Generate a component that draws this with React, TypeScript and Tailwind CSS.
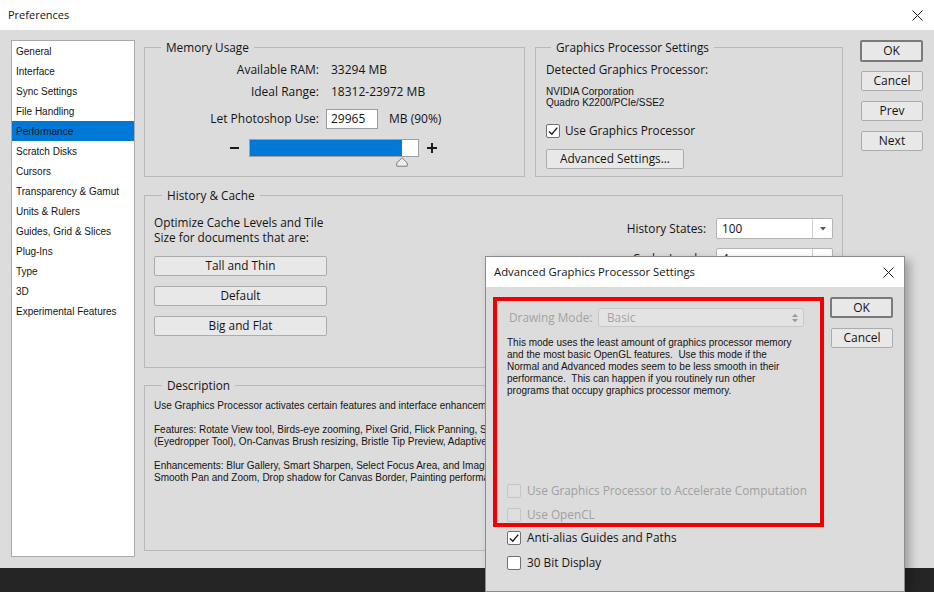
import React from 'react'

const small = "font-['Liberation_Sans',Arial,sans-serif] text-[10px]"

function CloseIcon({ size = 11 }: { size?: number }) {
  return (
    <svg width={size} height={size} viewBox="0 0 11 11" fill="none">
      <path d="M0.5 0.5L10.5 10.5M10.5 0.5L0.5 10.5" stroke="#1b1b1b" strokeWidth="1" />
    </svg>
  )
}

function Btn({
  children,
  primary = false,
  className = '',
}: {
  children: React.ReactNode
  primary?: boolean
  className?: string
}) {
  return (
    <div
      className={`flex items-center justify-center rounded-[2px] bg-[#e8e8e8] ${
        primary ? 'border-2 border-[#7a7a7a]' : 'border border-[#acacac]'
      } ${className}`}
    >
      {children}
    </div>
  )
}

function Check({ checked = false, disabled = false }: { checked?: boolean; disabled?: boolean }) {
  return (
    <span
      className={`flex h-[14px] w-[14px] shrink-0 items-center justify-center rounded-[2px] border ${
        disabled ? 'border-[#c6c6c6] bg-[#dedede]' : 'border-[#707070] bg-white'
      }`}
    >
      {checked && (
        <svg width="12" height="12" viewBox="0 0 12 12" fill="none">
          <path d="M2 6.5L4.8 9.3L10.3 2.6" stroke="#1e1e1e" strokeWidth="1.4" />
        </svg>
      )}
    </span>
  )
}

function Combo({ value }: { value: string }) {
  return (
    <div className="flex h-[21px] w-[117px] rounded-[2px] border border-[#b4b4b4] bg-white">
      <div className="flex-1 pl-[5px] leading-[19px]">{value}</div>
      <div className="flex w-[20px] items-center justify-center border-l border-[#d0d0d0]">
        <svg width="6" height="4" viewBox="0 0 6 4">
          <path d="M0 0H6L3 3.5Z" fill="#555" />
        </svg>
      </div>
    </div>
  )
}

function Group({
  title,
  className,
  legendClass = 'ml-[16px]',
  children,
}: {
  title: string
  className: string
  legendClass?: string
  children: React.ReactNode
}) {
  return (
    <fieldset className={`border border-[#b9b9b9] ${className}`}>
      <legend className={`px-[5px] text-[11.8px] leading-[16px] ${legendClass}`}>{title}</legend>
      {children}
    </fieldset>
  )
}

const sections = [
  'General',
  'Interface',
  'Sync Settings',
  'File Handling',
  'Performance',
  'Scratch Disks',
  'Cursors',
  'Transparency & Gamut',
  'Units & Rulers',
  'Guides, Grid & Slices',
  'Plug-Ins',
  'Type',
  '3D',
  'Experimental Features',
]

export default function App() {
  return (
    <div className="relative h-[592px] w-[934px] overflow-hidden bg-[#dcdcdc] font-['Open_Sans','Noto_Sans',sans-serif] text-[11.8px] text-[#141414]">
      {/* title bar */}
      <div className="flex h-[30px] items-center justify-between bg-white pl-[8px] pr-[11px]">
        <span className="text-[11px]">Preferences</span>
        <CloseIcon />
      </div>

      <div className="flex h-[538px] items-start pl-[11px] pt-[9px]">
        {/* sections list */}
        <div className={`mt-px h-[517px] w-[124px] border border-[#a9a9a9] bg-white ${small}`}>
          {sections.map((s) => (
            <div
              key={s}
              className={`flex h-[20px] items-center pl-[4px] ${s === 'Performance' ? 'bg-[#0078d7]' : ''}`}
            >
              {s}
            </div>
          ))}
        </div>

        <div className="ml-[9px] flex w-[699px] flex-col">
          <div className="flex gap-[10px]">
            <Group title="Memory Usage" className="h-[138px] w-[381px]">
              <div className="mt-[5px] flex flex-col text-[12px]">
                <div className="flex h-[20px] items-center">
                  <span className="w-[174px] text-right">Available RAM:</span>
                  <span className="ml-[12px]">33294 MB</span>
                </div>
                <div className="mt-[2px] flex h-[20px] items-center">
                  <span className="w-[174px] text-right">Ideal Range:</span>
                  <span className="ml-[12px]">18312-23972 MB</span>
                </div>
                <div className="mt-[7px] flex h-[20px] items-center">
                  <span className="w-[174px] text-right">Let Photoshop Use:</span>
                  <div className="ml-[7px] h-[20px] w-[52px] border border-[#9c9c9c] bg-white pl-[4px] leading-[18px]">
                    29965
                  </div>
                  <span className="ml-[11px]">MB (90%)</span>
                </div>
                <div className="mt-[10px] flex h-[18px] items-center pl-[81px]">
                  <div className="flex w-[16px] justify-center">
                    <svg width="9" height="2" viewBox="0 0 9 2">
                      <rect width="9" height="2" fill="#1b1b1b" />
                    </svg>
                  </div>
                  <div className="relative ml-[7px] h-[18px] w-[170px] border border-[#a0a0a0] bg-white">
                    <div className="h-full w-[152px] bg-[#0078d7]" />
                    <svg
                      className="absolute left-[146px] top-[17px]"
                      width="12"
                      height="10"
                      viewBox="0 0 12 10"
                    >
                      <path d="M6 0.8L11.2 6V9.2H0.8V6Z" fill="#efefef" stroke="#7a7a7a" strokeWidth="1" />
                    </svg>
                  </div>
                  <div className="ml-[5px] flex w-[16px] justify-center">
                    <svg width="10" height="10" viewBox="0 0 10 10">
                      <rect y="4" width="10" height="2" fill="#1b1b1b" />
                      <rect x="4" width="2" height="10" fill="#1b1b1b" />
                    </svg>
                  </div>
                </div>
              </div>
            </Group>

            <Group title="Graphics Processor Settings" className="h-[138px] w-[308px]" legendClass="ml-[15px]">
              <div className="flex flex-col items-start pl-[10px]">
                <div className="mt-[6px] leading-[16px]">Detected Graphics Processor:</div>
                <div className={`mt-[9px] leading-[11px] ${small}`}>
                  NVIDIA Corporation
                  <br />
                  Quadro K2200/PCIe/SSE2
                </div>
                <div className="mt-[15px] flex h-[16px] items-center">
                  <Check checked />
                  <span className="ml-[5px]">Use Graphics Processor</span>
                </div>
                <Btn className="mt-[10px] h-[20px] w-[138px]">Advanced Settings...</Btn>
              </div>
            </Group>
          </div>

          <Group title="History & Cache" className="mt-[10px] h-[181px] w-[699px]" legendClass="ml-[17px]">
            <div className="flex justify-between pl-[9px] pr-[9px]">
              <div className="flex flex-col">
                <div className="mt-[12px] leading-[15px]">
                  <div>Optimize Cache Levels and Tile</div>
                  <div>Size for documents that are:</div>
                </div>
                <Btn className="mt-[11px] h-[20px] w-[173px]">Tall and Thin</Btn>
                <Btn className="mt-[10px] h-[20px] w-[173px]">Default</Btn>
                <Btn className="mt-[10px] h-[20px] w-[173px]">Big and Flat</Btn>
              </div>
              <div className="mt-[15px] flex flex-col items-end gap-[9px]">
                <div className="flex items-center">
                  <span className="mr-[10px]">History States:</span>
                  <Combo value="100" />
                </div>
                <div className="flex items-center">
                  <span className="mr-[10px]">Cache Levels:</span>
                  <Combo value="4" />
                </div>
              </div>
            </div>
          </Group>

          <Group title="Description" className="mt-[9px] h-[174px] w-[699px] overflow-hidden" legendClass="ml-[17px]">
            <div className={`whitespace-nowrap pl-[9px] pt-[7px] leading-[12px] ${small}`}>
              <div>
                Use Graphics Processor activates certain features and interface enhancements. It does not activate
                OpenGL on already open document windows.
              </div>
              <div className="mt-[12px]">
                Features: Rotate View tool, Birds-eye zooming, Pixel Grid, Flick Panning, Scrubby Zoom, HUD Color
                Picker and Rich Cursor info, Sampling Ring
              </div>
              <div>
                (Eyedropper Tool), On-Canvas Brush resizing, Bristle Tip Preview, Adaptive Wide Angle, Lighting Effects
                Gallery, Oil Paint, 3D
              </div>
              <div className="mt-[12px]">
                Enhancements: Blur Gallery, Smart Sharpen, Select Focus Area, and Image Size with Preserve Details
                (Reduced Noise), Camera Raw
              </div>
              <div>Smooth Pan and Zoom, Drop shadow for Canvas Border, Painting performance, Transform/Warp</div>
            </div>
          </Group>
        </div>

        <div className="ml-[17px] mt-px flex w-[63px] flex-col items-end text-[12px]">
          <Btn primary className="h-[22px] w-[63px]">OK</Btn>
          <Btn className="mt-[9px] h-[20px] w-[62px]">Cancel</Btn>
          <Btn className="mt-[10px] h-[20px] w-[62px]">Prev</Btn>
          <Btn className="mt-[10px] h-[20px] w-[62px]">Next</Btn>
        </div>
      </div>

      <div className="h-[24px] bg-[#252525]" />

      {/* Advanced Graphics Processor Settings dialog */}
      <div className="absolute left-[485px] top-[256px] flex h-[336px] w-[420px] flex-col border border-[#8c8c8c] bg-[#dcdcdc] shadow-[5px_4px_9px_rgba(0,0,0,0.28)]">
        <div className="flex h-[30px] shrink-0 items-center justify-between bg-white pl-[8px] pr-[10px]">
          <span className="text-[11.3px]">Advanced Graphics Processor Settings</span>
          <CloseIcon />
        </div>
        <div className="flex pl-[7px] pt-[10px]">
          <div className="flex w-[331px] flex-col">
            <div className="flex h-[230px] flex-col border-4 border-[#f00000] pl-[10px] pt-[7px]">
              <div className="ml-[2px] flex h-[19px] items-center">
                <span className="w-[89px] text-[#a3a3a3]">Drawing Mode:</span>
                <div className="flex h-[19px] w-[206px] items-center justify-between rounded-[3px] border border-[#c8c8c8] bg-[#e3e3e3] pl-[8px] pr-[5px] text-[#a3a3a3]">
                  <span>Basic</span>
                  <svg width="6" height="10" viewBox="0 0 6 10">
                    <path d="M0 4H6L3 0.8Z M0 6H6L3 9.2Z" fill="#9a9a9a" />
                  </svg>
                </div>
              </div>
              <div className={`mt-[10px] whitespace-pre leading-[12px] ${small}`}>
                {'This mode uses the least amount of graphics processor memory\nand the most basic OpenGL features.  Use this mode if the\nNormal and Advanced modes seem to be less smooth in their\nperformance.  This can happen if you routinely run other\nprograms that occupy graphics processor memory.'}
              </div>
              <div className="mt-auto flex flex-col gap-[8px] text-[#a0a0a0]">
                <div className="flex h-[16px] items-center">
                  <Check disabled />
                  <span className="ml-[6px]">Use Graphics Processor to Accelerate Computation</span>
                </div>
                <div className="flex h-[16px] items-center">
                  <Check disabled />
                  <span className="ml-[6px]">Use OpenCL</span>
                </div>
              </div>
            </div>
            <div className="mt-[3px] flex flex-col gap-[9px] pl-[14px]">
              <div className="flex h-[16px] items-center">
                <Check checked />
                <span className="ml-[6px]">Anti-alias Guides and Paths</span>
              </div>
              <div className="flex h-[16px] items-center">
                <Check />
                <span className="ml-[6px]">30 Bit Display</span>
              </div>
            </div>
          </div>
          <div className="ml-[6px] flex w-[63px] flex-col items-end text-[12px]">
            <Btn primary className="h-[21px] w-[63px]">OK</Btn>
            <Btn className="mt-[10px] h-[20px] w-[62px]">Cancel</Btn>
          </div>
        </div>
      </div>
    </div>
  )
}
